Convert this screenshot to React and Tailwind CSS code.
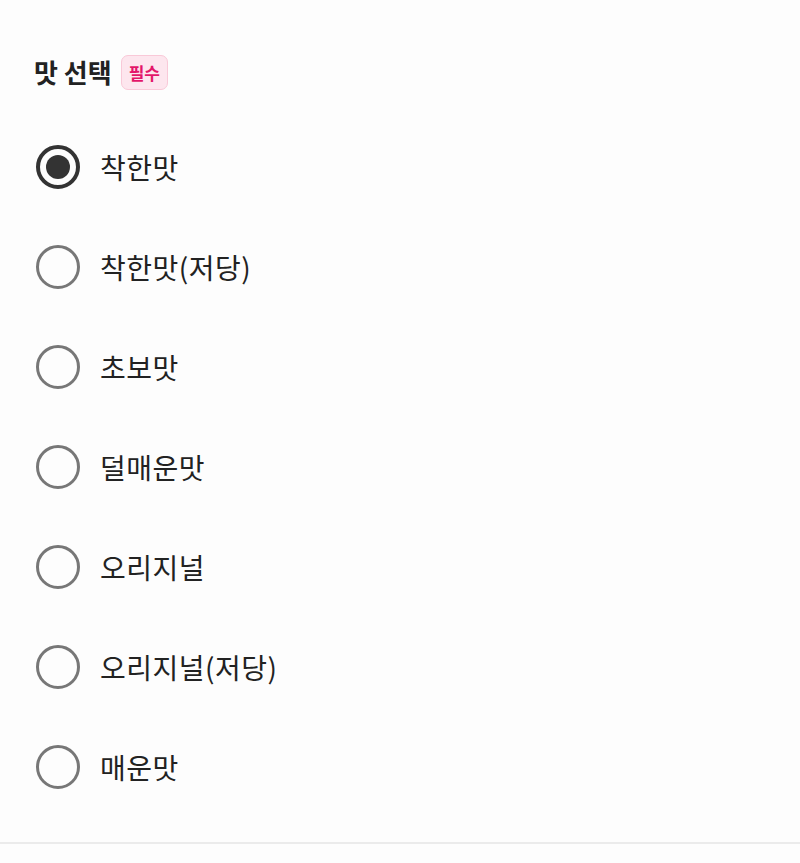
import React, { useState } from "react";

const options = [
  "착한맛",
  "착한맛(저당)",
  "초보맛",
  "덜매운맛",
  "오리지널",
  "오리지널(저당)",
  "매운맛",
];

const App = () => {
  const [selected, setSelected] = useState(0);

  return (
    <main
      className="min-h-screen bg-[#fdfdfd] text-[#222]"
      style={{ fontFamily: '"Noto Sans CJK KR", "Noto Sans", sans-serif' }}
    >
      {/* Header */}
      <div className="px-[34px] pt-[54px]">
        <div className="flex h-[36px] items-center gap-[9px]">
          <h2 className="text-[26px] font-bold leading-none text-[#222]">맛 선택</h2>
          <span className="flex h-[35px] items-center rounded-[7px] border border-[#f9c9d8] bg-[#fde6ee] px-[7px] text-[17px] font-bold leading-none text-[#e3166a]">
            필수
          </span>
        </div>
      </div>

      {/* Options */}
      <ul className="mt-[27px] px-[36px]">
        {options.map((label, i) => (
          <li key={label}>
            <button
              onClick={() => setSelected(i)}
              className="flex h-[100px] w-full items-center gap-[20px] text-left"
            >
              {selected === i ? (
                <span className="flex h-[44px] w-[44px] items-center justify-center rounded-full border-[4px] border-[#333]">
                  <span className="h-[24px] w-[24px] rounded-full bg-[#333]" />
                </span>
              ) : (
                <span className="h-[44px] w-[44px] rounded-full border-[3px] border-[#777]" />
              )}
              <span className="text-[28px] leading-none tracking-[0.5px] text-[#222]">{label}</span>
            </button>
          </li>
        ))}
      </ul>

      <div className="mt-[25px] h-[2px] bg-[#ebebeb]" />
    </main>
  );
};

export default App;
